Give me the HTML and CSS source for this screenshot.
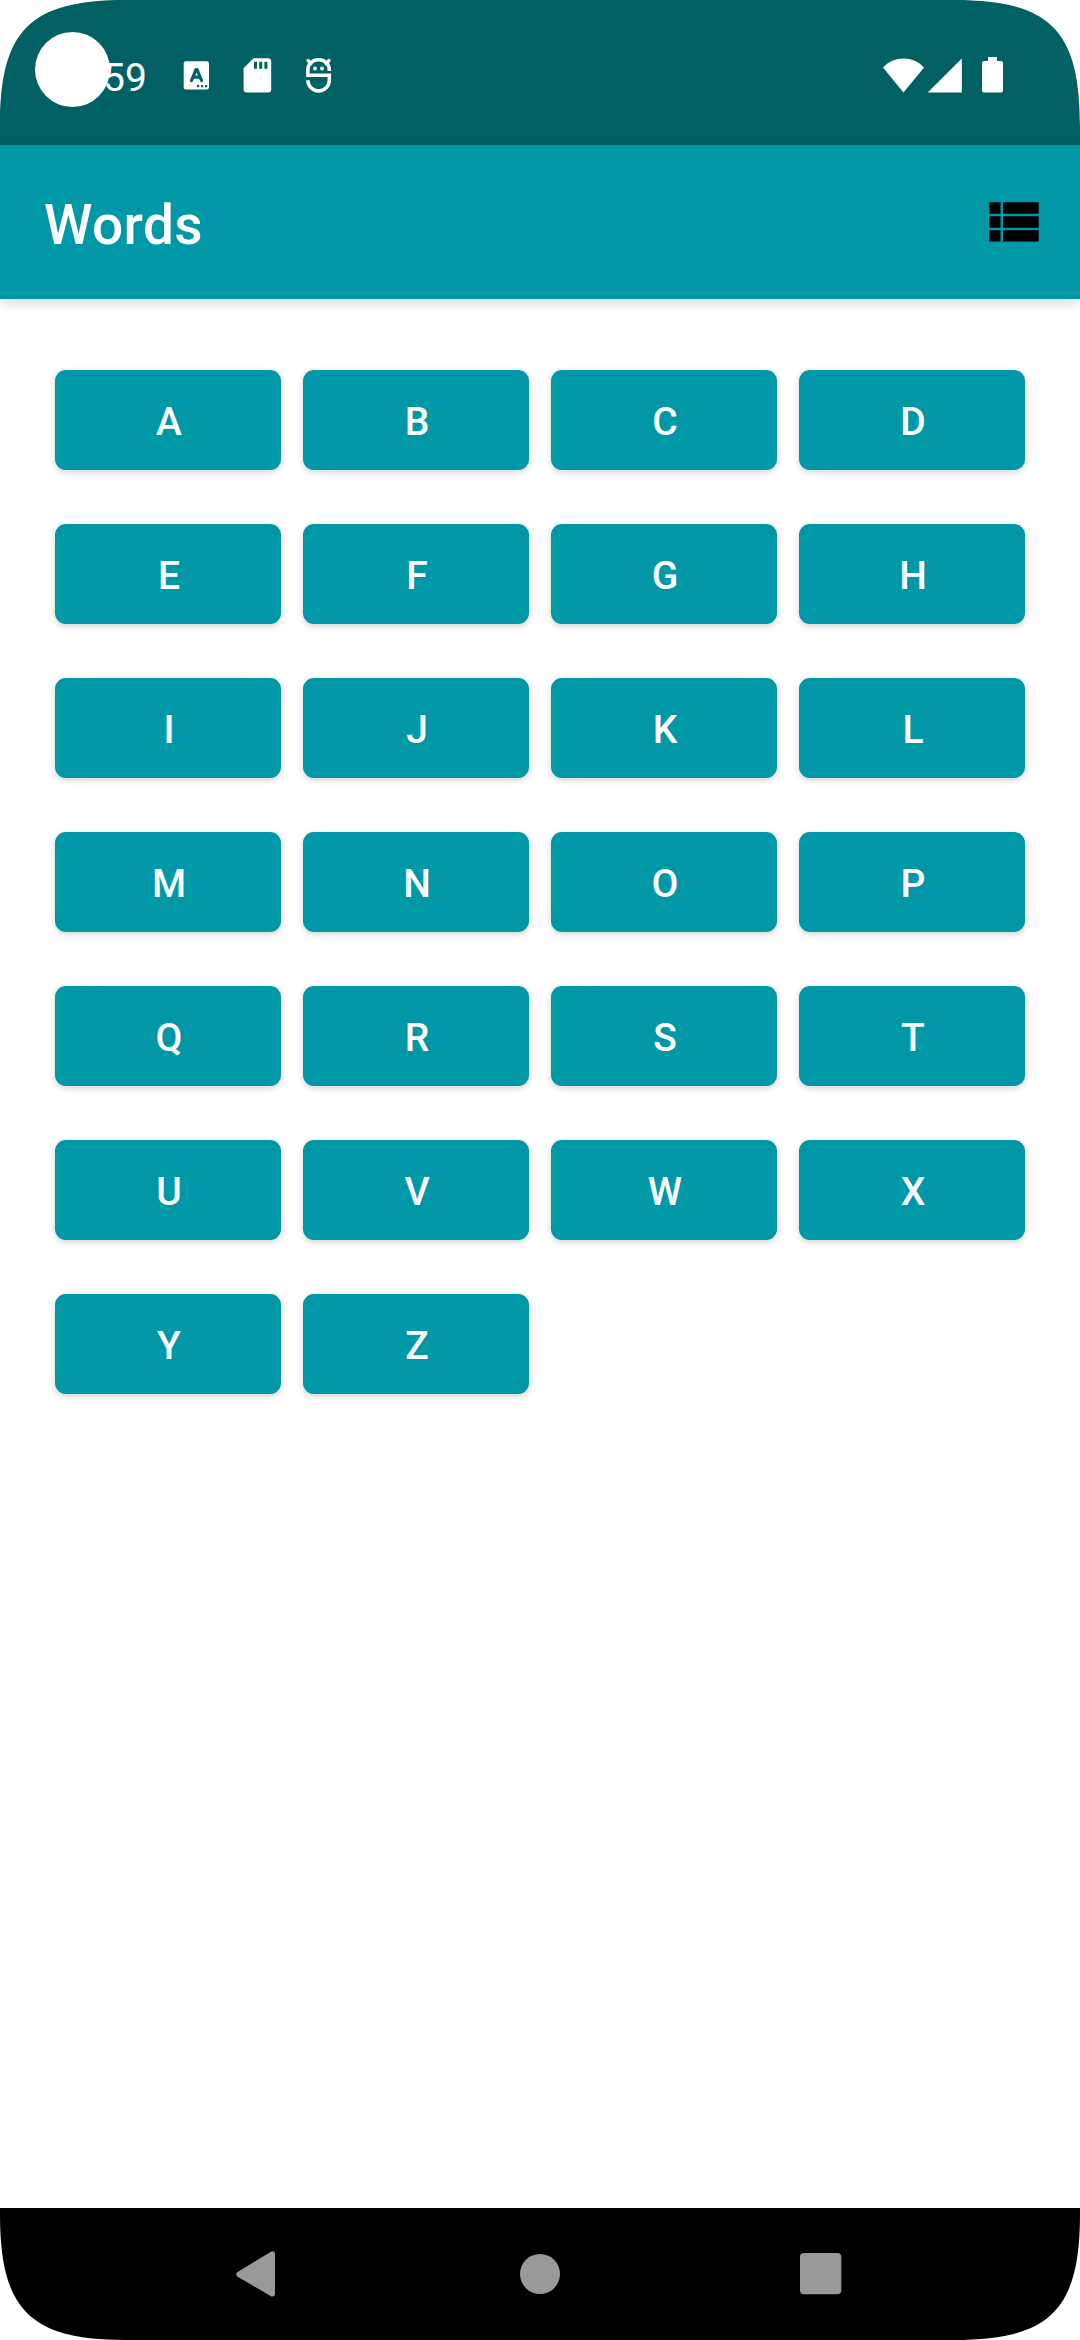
FILE: index.html
```html
<!DOCTYPE html>
<html lang="en">
<head>
<meta charset="utf-8">
<title>Words</title>
<link rel="stylesheet" href="styles.css">
</head>
<body>
<div class="screen">
  <header class="status-bar">
    <span class="clock">59</span>
    <div class="notifications">
      <svg width="27" height="36" viewBox="183 57 27 36"><rect x="183.7" y="61.3" width="25.3" height="28.2" rx="2.2" fill="#fff"/><path d="M191.500 80.500L196 69.500h1l4.500 11M193.500 77.200h6" fill="none" stroke="#006064" stroke-width="3.200" stroke-linecap="round" stroke-linejoin="round"/><path d="M197 85h2.200v2.200H197zM201 85h2.200v2.200H201zM205 85h2.200v2.200H205z" fill="#006064"/></svg>
      <svg width="29" height="36" viewBox="243 57 29 36"><path d="M253.500 58.300h14.500a3.200 3.200 0 0 1 3.200 3.200v27.800a3.200 3.200 0 0 1-3.200 3.200h-21.200a3.200 3.200 0 0 1-3.200-3.200v-21z" fill="#fff"/><path d="M254 61.700h3v7h-3zM259.200 61.700h3v7h-3zM264.400 61.700h3v7h-3z" fill="#006064"/></svg>
      <svg width="27" height="36" viewBox="305 57 27 36"><path d="M329.300 71V69.500a10.700 9.700 0 0 0-21.400 0v5.700h21.400v5a10.700 10.700 0 0 1-21.400 0" fill="none" stroke="#fff" stroke-width="3.500"/><path d="M308 60.500l3 3M329 60.500l-3 3" stroke="#fff" stroke-width="3.200" stroke-linecap="round"/><circle cx="315" cy="68.500" r="1.900" fill="#fff"/><circle cx="322" cy="68.500" r="1.900" fill="#fff"/></svg>
    </div>
    <div class="system-icons">
      <svg width="43" height="36" viewBox="882 57 43 36"><path d="M883 67.500C894 55.500 913 55.500 924 67.500L903.500 92.500z" fill="#fff"/></svg>
      <svg width="36" height="36" viewBox="927 57 36 36"><path d="M961.800 58.500v34H927.700z" fill="#fff"/></svg>
      <svg class="battery" width="21" height="36" viewBox="982 57 21 36"><path d="M988 57h9v4h4a2 2 0 0 1 2 2v27.600a2 2 0 0 1-2 2h-17a2 2 0 0 1-2-2V63a2 2 0 0 1 2-2h4z" fill="#fff"/></svg>
    </div>
  </header>
  <div class="app-bar">
    <h1 class="title">Words</h1>
    <svg width="50" height="40" viewBox="989 202 50 40"><path d="M989.300 202.300h11.200v11.400h-11.200zM1003 202.300h35.700v11.400H1003zM989.300 216.300h11.200v11.400h-11.200zM1003 216.300h35.700v11.400H1003zM989.300 230.300h11.200v11.100h-11.200zM1003 230.300h35.700v11.100H1003z"/></svg>
  </div>
  <main class="letters">
    <button class="letter">A</button><button class="letter">B</button><button class="letter">C</button><button class="letter">D</button>
    <button class="letter">E</button><button class="letter">F</button><button class="letter">G</button><button class="letter">H</button>
    <button class="letter">I</button><button class="letter">J</button><button class="letter">K</button><button class="letter">L</button>
    <button class="letter">M</button><button class="letter">N</button><button class="letter">O</button><button class="letter">P</button>
    <button class="letter">Q</button><button class="letter">R</button><button class="letter">S</button><button class="letter">T</button>
    <button class="letter">U</button><button class="letter">V</button><button class="letter">W</button><button class="letter">X</button>
    <button class="letter">Y</button><button class="letter">Z</button>
  </main>
  <nav class="nav-bar">
    <svg width="40" height="46" viewBox="0 0 40 46"><path d="M3 23.300L36.300 3v39.800z" fill="#999" stroke="#999" stroke-width="5.400" stroke-linejoin="round"/></svg>
    <svg width="40" height="40" viewBox="0 0 40 40"><circle cx="20" cy="20" r="20" fill="#999"/></svg>
    <svg width="42" height="42" viewBox="0 0 42 42"><rect width="41.300" height="41.300" rx="4" fill="#999"/></svg>
  </nav>
  <div class="camera"></div>
  <svg class="corner top-left" viewBox="0 0 126 126"><path d="M0 0V126C0 30 30 0 126 0z"/></svg>
  <svg class="corner top-right" viewBox="0 0 126 126"><path d="M0 0V126C0 30 30 0 126 0z"/></svg>
  <svg class="corner bottom-left" viewBox="0 0 126 126"><path d="M0 0V126C0 30 30 0 126 0z"/></svg>
  <svg class="corner bottom-right" viewBox="0 0 126 126"><path d="M0 0V126C0 30 30 0 126 0z"/></svg>
</div>
</body>
</html>
```
FILE: styles.css
```css
* { box-sizing: border-box; }
body { margin: 0; background: #fff; font-family: Roboto, sans-serif; }
svg { display: block; flex: none; }
.screen {
  position: relative;
  width: 1080px;
  height: 2340px;
  display: flex;
  flex-direction: column;
  background: #fff;
  overflow: hidden;
}
.status-bar {
  height: 145px;
  padding: 5px 77px 0 103px;
  display: flex;
  align-items: center;
  background: #006064;
  color: #fff;
}
.clock { width: 80px; font-size: 39px; line-height: 46px; margin-top: 5px; }
.notifications { display: flex; gap: 33px; }
.system-icons { display: flex; gap: 2px; margin-left: auto; }
.battery { margin-left: 17px; }
.app-bar {
  height: 154px;
  padding: 0 41px 0 44px;
  display: flex;
  align-items: center;
  justify-content: space-between;
  background: #0097a7;
  box-shadow: 0 4px 12px rgba(0, 0, 0, .15);
}
.title {
  margin: 6px 0 0;
  color: #fff;
  font-size: 55px;
  font-weight: 500;
  line-height: 64px;
  letter-spacing: .4px;
}
.letters {
  flex: 1;
  padding: 71px 55px 0;
  display: grid;
  grid-template-columns: repeat(4, 226px);
  grid-auto-rows: 100px;
  gap: 54px 22px;
  align-content: start;
}
.letter {
  border: 0;
  border-radius: 11px;
  padding: 4px 0 0 2px;
  background: #0097a7;
  color: #fff;
  font: 500 39px/46px Roboto, sans-serif;
  box-shadow: 0 2px 6px rgba(0, 0, 0, .19);
}
.nav-bar {
  height: 132px;
  padding-left: 236px;
  display: grid;
  grid-template-columns: 284px 280px 42px;
  align-items: center;
  background: #000;
}
.camera {
  position: absolute;
  left: 35px;
  top: 32px;
  width: 75px;
  height: 75px;
  border-radius: 50%;
  background: #fff;
}
.corner { position: absolute; width: 126px; height: 126px; fill: #fff; }
.top-left { left: 0; top: 0; }
.top-right { right: 0; top: 0; transform: scaleX(-1); }
.bottom-left { left: 0; bottom: 0; transform: scaleY(-1); }
.bottom-right { right: 0; bottom: 0; transform: scale(-1); }
```
